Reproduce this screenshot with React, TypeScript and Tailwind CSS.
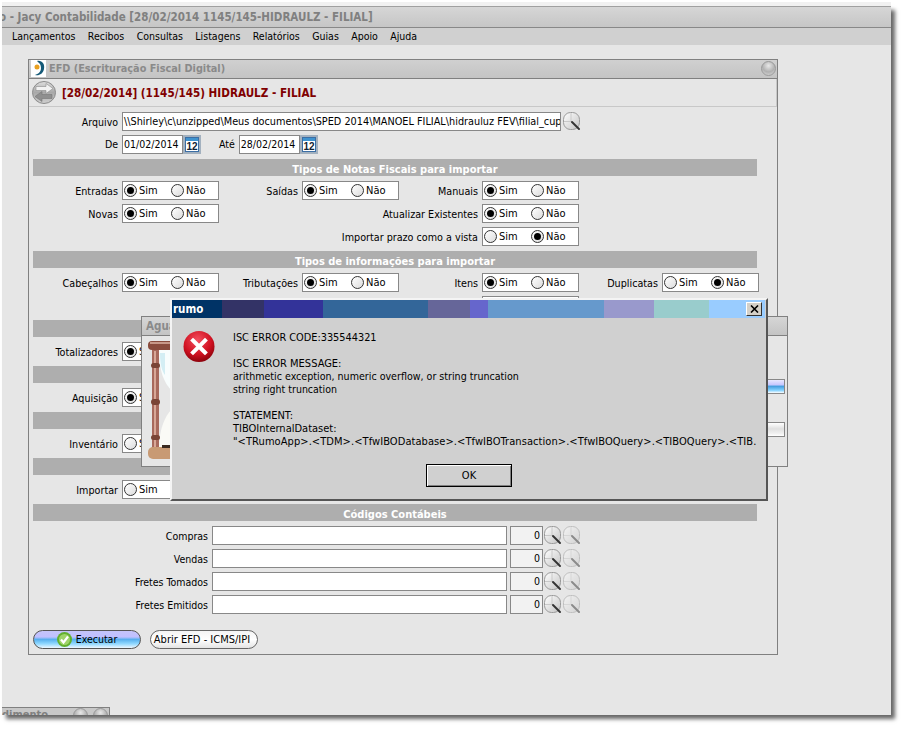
import type { ReactNode } from "react";

type RadioCell = { label: string; on: "sim" | "nao" | "none" };

const menuItems = ["Lançamentos", "Recibos", "Consultas", "Listagens", "Relatórios", "Guias", "Apoio", "Ajuda"];

const stripes = [
  "w-[50px] bg-[#003366]",
  "w-[42px] bg-[#333366]",
  "w-[59px] bg-[#333399]",
  "w-[105px] bg-[#336699]",
  "w-[42px] bg-[#666699]",
  "w-[18px] bg-[#6666cc]",
  "w-[116px] bg-[#6699cc]",
  "w-[50px] bg-[#9999cc]",
  "w-[55px] bg-[#99cccc]",
  "w-[56px] bg-[#99ccff]",
];

const accounts = ["Compras", "Vendas", "Fretes Tomados", "Fretes Emitidos"];

function Radio({ checked }: { checked: boolean }) {
  return (
    <span className="flex h-[13px] w-[13px] shrink-0 items-center justify-center rounded-full border border-[#333] bg-[linear-gradient(135deg,#fff,#dcdcdc)]">
      {checked && <span className="h-[7px] w-[7px] rounded-full bg-black" />}
    </span>
  );
}

function RadioBox({ on }: { on: RadioCell["on"] }) {
  return (
    <div className="flex h-[19px] w-[97px] shrink-0 items-center border border-[#888] bg-white pl-[1px]">
      <div className="flex w-[47px] items-center gap-[2px]">
        <Radio checked={on === "sim"} />
        <span className="text-[11px]">Sim</span>
      </div>
      <div className="flex items-center gap-[2px]">
        <Radio checked={on === "nao"} />
        <span className="text-[11px]">Não</span>
      </div>
    </div>
  );
}

function Row({ cells }: { cells: (RadioCell | null)[] }) {
  return (
    <div className="ml-[10px] grid h-[19px] grid-cols-[repeat(4,180px)]">
      {cells.map((cell, i) =>
        cell ? (
          <div key={i} className="flex items-center justify-end gap-[4px] whitespace-nowrap">
            <span className="pt-[1px] text-[10.7px]">{cell.label}</span>
            <RadioBox on={cell.on} />
          </div>
        ) : (
          <div key={i} />
        ),
      )}
    </div>
  );
}

function Section({ title, children }: { title?: string; children: ReactNode }) {
  return (
    <section className="mt-[5px]">
      <div className="ml-[4px] flex h-[17px] w-[724px] items-center justify-center bg-[#aeaeae] pt-[3px] text-[11px] font-bold text-white">
        {title}
      </div>
      <div className="mt-[5px] flex flex-col gap-[4px]">{children}</div>
    </section>
  );
}

function Magnifier({ faded }: { faded?: boolean }) {
  return (
    <svg width="18" height="19" viewBox="0 0 18 19" className={faded ? "shrink-0 opacity-50" : "shrink-0"}>
      <defs>
        <linearGradient id="lens" x1="0" y1="0" x2="1" y2="1">
          <stop offset="0" stopColor="#fff" />
          <stop offset="1" stopColor="#c4c4c4" />
        </linearGradient>
      </defs>
      <rect x="0.5" y="0.5" width="16" height="17" rx="7" fill="url(#lens)" stroke="#9a9a9a" />
      <path d="M1 9.5h7V1" fill="none" stroke="#c8c8c8" />
      <path d="M9 10l7 7" stroke="#333" strokeWidth="2" strokeLinecap="round" />
    </svg>
  );
}

function CalendarIcon() {
  return (
    <svg width="18" height="19" viewBox="0 0 18 19" className="shrink-0">
      <rect x="0" y="0" width="18" height="19" fill="#a3b1bf" />
      <rect x="2.5" y="2.5" width="13" height="14" fill="#fff" stroke="#3b6ea5" />
      <rect x="3" y="3" width="12" height="3" fill="#3f93cf" />
      <text x="9" y="15" textAnchor="middle" fontSize="10" fontWeight="700" fill="#123" fontFamily="Liberation Sans">
        12
      </text>
    </svg>
  );
}

function WindowDot({ size = 15 }: { size?: number }) {
  return (
    <svg width={size} height={size} viewBox="0 0 15 15" className="shrink-0">
      <defs>
        <radialGradient id="dot" cx="0.5" cy="0.3" r="0.8">
          <stop offset="0" stopColor="#e8e8e8" />
          <stop offset="0.55" stopColor="#b0b0b0" />
          <stop offset="1" stopColor="#dcdcdc" />
        </radialGradient>
      </defs>
      <circle cx="7.5" cy="7.5" r="7" fill="url(#dot)" stroke="#9a9a9a" />
    </svg>
  );
}

function AppLogo() {
  return (
    <svg width="15" height="17" viewBox="0 0 15 17" className="shrink-0">
      <rect width="15" height="17" fill="#fff" />
      <path d="M6 1c5-1 8 3 7 8s-5 7-9 6c3-1 6-3 6-7S8 3 6 1z" fill="#155a78" />
      <circle cx="6" cy="7" r="2.5" fill="#e8a020" />
    </svg>
  );
}

function ExchangeIcon() {
  return (
    <svg width="24" height="23" viewBox="0 0 24 23" className="shrink-0">
      <defs>
        <linearGradient id="swap" x1="0" y1="0" x2="0" y2="1">
          <stop offset="0" stopColor="#dedede" />
          <stop offset="0.5" stopColor="#a8a8a8" />
          <stop offset="1" stopColor="#d0d0d0" />
        </linearGradient>
      </defs>
      <ellipse cx="12" cy="11.5" rx="11.5" ry="11" fill="url(#swap)" stroke="#8a8a8a" />
      <path d="M4 5.5h10V2.5l7 5-7 5V9.5H4z" fill="#f2f2f2" stroke="#8c8c8c" strokeWidth="0.6" />
      <path d="M20 13.5H10v-3l-7 5 7 5v-3h10z" fill="#8f8f8f" stroke="#777" strokeWidth="0.6" />
    </svg>
  );
}

function ErrorIcon() {
  return (
    <svg width="32" height="33" viewBox="0 0 32 33" className="shrink-0">
      <defs>
        <radialGradient id="err" cx="0.45" cy="0.3" r="0.75">
          <stop offset="0" stopColor="#f45060" />
          <stop offset="0.6" stopColor="#d01020" />
          <stop offset="1" stopColor="#800008" />
        </radialGradient>
      </defs>
      <circle cx="16" cy="16.5" r="15.5" fill="url(#err)" />
      <path d="M10 10.5l12 12M22 10.5l-12 12" stroke="#fff" strokeWidth="4" strokeLinecap="square" />
    </svg>
  );
}

function Hourglass() {
  return (
    <svg width="30" height="120" viewBox="0 0 30 120" className="shrink-0">
      <path d="M11 9C11 30 16 42 24 50L30 50V9z" fill="#f8fdfd" />
      <path d="M12 12C12 24 14 30 17 34L17 12z" fill="#d4eef4" />
      <path d="M24 68C16 76 11 90 11 108L30 108V68z" fill="#fafaf6" />
      <rect x="4" y="6" width="7" height="102" fill="#a8695c" />
      <rect x="6" y="10" width="2" height="96" fill="#d8a898" />
      <rect x="3" y="22" width="9" height="5" rx="2.5" fill="#7a4436" />
      <rect x="3" y="58" width="9" height="6" rx="3" fill="#7a4436" />
      <rect x="3" y="94" width="9" height="5" rx="2.5" fill="#7a4436" />
      <rect x="0" y="0" width="30" height="9" rx="4" fill="#8a4b3c" />
      <rect x="2" y="1" width="28" height="2" fill="#c89888" />
      <rect x="0" y="106" width="30" height="12" rx="5" fill="#c89a74" />
      <rect x="14" y="104" width="16" height="3" fill="#3a2a20" />
    </svg>
  );
}

function CheckIcon() {
  return (
    <svg width="15" height="15" viewBox="0 0 15 15" className="shrink-0">
      <circle cx="7.5" cy="7.5" r="7.5" fill="#62b02e" />
      <circle cx="7.5" cy="7.5" r="5.5" fill="#9ed36a" />
      <path d="M4 7.5l2.5 3L11 4.5" fill="none" stroke="#fff" strokeWidth="2.2" />
    </svg>
  );
}

function AccountRow({ label }: { label: string }) {
  return (
    <div className="flex h-[19px] items-center">
      <span className="w-[179px] whitespace-nowrap pt-[1px] text-right">{label}</span>
      <div className="ml-[4px] h-[19px] w-[295px] border border-[#888] bg-white" />
      <div className="ml-[3px] h-[19px] w-[33px] border border-[#888] bg-[#f2f2f2] pr-[2px] text-right">0</div>
      <div className="ml-[1px] flex gap-[1px]">
        <Magnifier />
        <Magnifier faded />
      </div>
    </div>
  );
}

export default function App() {
  return (
    <div className="relative h-[729px] w-[905px] overflow-hidden bg-white font-['DejaVu_Sans_Condensed','Liberation_Sans',sans-serif] text-[10.5px] leading-[17px] text-black">
      <div className="ml-[2px] h-[4px] w-[889px] translate-y-[2px] bg-[#f1f1f1]" />
      <div className="ml-[2px] mt-[2px] flex h-[709px] w-[889px] flex-col border-t border-[#a0a0a0] bg-[#e6e6e6] shadow-[4px_4px_4px_rgba(0,0,0,0.6)]">
        <div className="flex h-[21px] shrink-0 items-center overflow-hidden border-b border-[#888] bg-[linear-gradient(#d6d6d6,#c6c6c6)] whitespace-nowrap text-[11.5px] font-bold text-[#808080]">
          <span className="-ml-[3px]">o - Jacy Contabilidade [28/02/2014 1145/145-HIDRAULZ - FILIAL]</span>
        </div>
        <nav className="flex h-[17px] shrink-0 items-center gap-[12.4px] bg-[#d0d0d0] pl-[10px]">
          {menuItems.map((item) => (
            <span key={item}>{item}</span>
          ))}
        </nav>

        <div className="ml-[26px] mt-[14px] h-[596px] w-[750px] border border-[#808080]">
          <div className="flex h-[19px] items-center gap-[3px] border-b border-[#808080] bg-[linear-gradient(#d0d0d0,#c4c4c4)] pb-[1px] pl-[2px] pr-[1px] text-[10.8px] font-bold text-[#8a8a8a]">
            <AppLogo />
            <span className="flex-1">EFD (Escrituração Fiscal Digital)</span>
            <WindowDot />
          </div>
          <div className="flex h-[28px] items-center gap-[6px] border-b border-r border-[#c8c8c8] pl-[3px] text-[11.6px] font-bold text-[#800000]">
            <ExchangeIcon />
            <span className="pt-[2px]">[28/02/2014] (1145/145) HIDRAULZ - FILIAL</span>
          </div>

          <div className="mt-[5px] flex h-[19px] items-center">
            <span className="w-[89px] pt-[1px] text-right">Arquivo</span>
            <div className="ml-[4px] h-[19px] w-[439px] overflow-hidden whitespace-nowrap border border-[#888] bg-white pl-[1px] text-[10.8px]">
              \\Shirley\c\unzipped\Meus documentos\SPED 2014\MANOEL FILIAL\hidrauluz FEV\filial_cupom
            </div>
            <div className="ml-[2px]">
              <Magnifier />
            </div>
          </div>
          <div className="mt-[4px] flex h-[19px] items-center">
            <span className="w-[89px] text-right">De</span>
            <div className="ml-[4px] h-[19px] w-[61px] border border-[#888] bg-white pl-[1px]">01/02/2014</div>
            <CalendarIcon />
            <span className="ml-[18px]">Até</span>
            <div className="ml-[4px] h-[19px] w-[61px] border border-[#888] bg-white pl-[1px]">28/02/2014</div>
            <CalendarIcon />
          </div>

          <Section title="Tipos de Notas Fiscais para importar">
            <Row cells={[{ label: "Entradas", on: "sim" }, { label: "Saídas", on: "sim" }, { label: "Manuais", on: "sim" }, null]} />
            <Row cells={[{ label: "Novas", on: "sim" }, null, { label: "Atualizar Existentes", on: "sim" }, null]} />
            <Row cells={[null, null, { label: "Importar prazo como a vista", on: "nao" }, null]} />
          </Section>
          <Section title="Tipos de informações para importar">
            <Row
              cells={[
                { label: "Cabeçalhos", on: "sim" },
                { label: "Tributações", on: "sim" },
                { label: "Itens", on: "sim" },
                { label: "Duplicatas", on: "nao" },
              ]}
            />
            <Row cells={[null, null, { label: "", on: "none" }, null]} />
          </Section>
          <Section>
            <Row cells={[{ label: "Totalizadores", on: "sim" }, null, null, null]} />
          </Section>
          <Section>
            <Row cells={[{ label: "Aquisição", on: "sim" }, null, null, null]} />
          </Section>
          <Section>
            <Row cells={[{ label: "Inventário", on: "none" }, null, null, null]} />
          </Section>
          <Section>
            <Row cells={[{ label: "Importar", on: "none" }, null, null, null]} />
          </Section>
          <Section title="Códigos Contábeis">
            {accounts.map((label) => (
              <AccountRow key={label} label={label} />
            ))}
          </Section>

          <div className="ml-[4px] mt-[16px] flex gap-[9px]">
            <button className="flex h-[19px] w-[108px] items-center justify-center gap-[4px] rounded-full border border-[#555] bg-[linear-gradient(#c4c4fa_0%,#c0c0ff_35%,#58b0ee_50%,#90d8ff_75%,#eef8ff_100%)]">
              <CheckIcon />
              <span>Executar</span>
            </button>
            <button className="flex h-[19px] w-[108px] items-center justify-center rounded-full border border-[#666] bg-[linear-gradient(#f4f4f4,#ffffff_50%,#e4e4e4)] pr-[4px] text-[11px]">
              Abrir EFD - ICMS/IPI
            </button>
          </div>
        </div>
      </div>

      {/* minimized window peeking from the bottom edge */}
      <div className="absolute left-[2px] top-[707px] flex h-[8px] w-[108px] items-start overflow-hidden border-r border-t border-[#808080] bg-[#c8c8c8] pr-[1px] text-[11px] font-bold leading-[14px] text-[#808080]">
        <span className="flex-1">dimento</span>
        <div className="flex gap-[5px]">
          <WindowDot />
          <WindowDot />
        </div>
      </div>

      {/* wait window behind the error box */}
      <div className="absolute left-[141px] top-[316px] flex h-[151px] w-[647px] flex-col border border-[#808080] bg-[#e6e6e6]">
        <div className="flex h-[19px] items-center border-b border-[#808080] bg-[linear-gradient(#d6d6d6,#c4c4c4)] pl-[4px] text-[11.5px] font-bold text-[#8a8a8a]">
          Aguarde
        </div>
        <div className="flex flex-1 justify-between pl-[6px] pr-[2px]">
          <div className="pt-[5px]">
            <Hourglass />
          </div>
          <div className="flex flex-col gap-[28px] pt-[43px]">
            <div className="h-[15px] w-[300px] border border-[#888] bg-[linear-gradient(#e8e8ff,#c8c8ff_35%,#48a0e0_50%,#88d4ff_80%,#fff)]" />
            <div className="h-[15px] w-[300px] border border-[#888] bg-[linear-gradient(#fff,#e0e0e0_45%,#f0f0f0_80%,#fff)]" />
          </div>
        </div>
      </div>

      {/* error box */}
      <div className="absolute left-[170px] top-[298px] flex h-[203px] w-[598px] flex-col border-b-2 border-l-2 border-r-2 border-t-2 border-b-[#555] border-l-[#f4f4f4] border-r-[#555] border-t-[#f4f4f4] bg-[#d0d0d0]">
        <div className="relative flex h-[18px] shrink-0">
          {stripes.map((s) => (
            <div key={s} className={s} />
          ))}
          <span className="absolute left-[1px] top-0 text-[11.5px] font-bold leading-[18px] text-white">rumo</span>
          <button className="absolute right-[4px] top-[2px] flex h-[14px] w-[16px] items-center justify-center border border-b-[#333] border-l-white border-r-[#333] border-t-white bg-[#d4d0c8]">
            <svg width="9" height="8" viewBox="0 0 9 8">
              <path d="M1 0.5l7 7M8 0.5l-7 7" stroke="#000" strokeWidth="1.6" />
            </svg>
          </button>
        </div>
        <div className="flex flex-1 flex-col">
          <div className="flex">
            <div className="ml-[11px] mt-[12px]">
              <ErrorIcon />
            </div>
            <div className="ml-[18px] mt-[13px] whitespace-nowrap leading-[13px]">
              <p className="text-[10.85px]">ISC ERROR CODE:335544321</p>
              <p className="mt-[13px] text-[11px]">ISC ERROR MESSAGE:</p>
              <p className="text-[10.6px]">arithmetic exception, numeric overflow, or string truncation</p>
              <p className="text-[10.5px]">string right truncation</p>
              <p className="mt-[13px] text-[11px]">STATEMENT:</p>
              <p className="text-[11px]">TIBOInternalDataset:</p>
              <p className="text-[11px] tracking-[0.07px]">"&lt;TRumoApp&gt;.&lt;TDM&gt;.&lt;TfwIBODatabase&gt;.&lt;TfwIBOTransaction&gt;.&lt;TfwIBOQuery&gt;.&lt;TIBOQuery&gt;.&lt;TIB.</p>
            </div>
          </div>
          <div className="mt-[16px] flex justify-center">
            <button className="h-[23px] w-[86px] border border-black bg-[#d0d0d0] text-[11px] shadow-[inset_1px_1px_0_#fff,inset_-1px_-1px_0_#808080]">
              OK
            </button>
          </div>
        </div>
      </div>
    </div>
  );
}
